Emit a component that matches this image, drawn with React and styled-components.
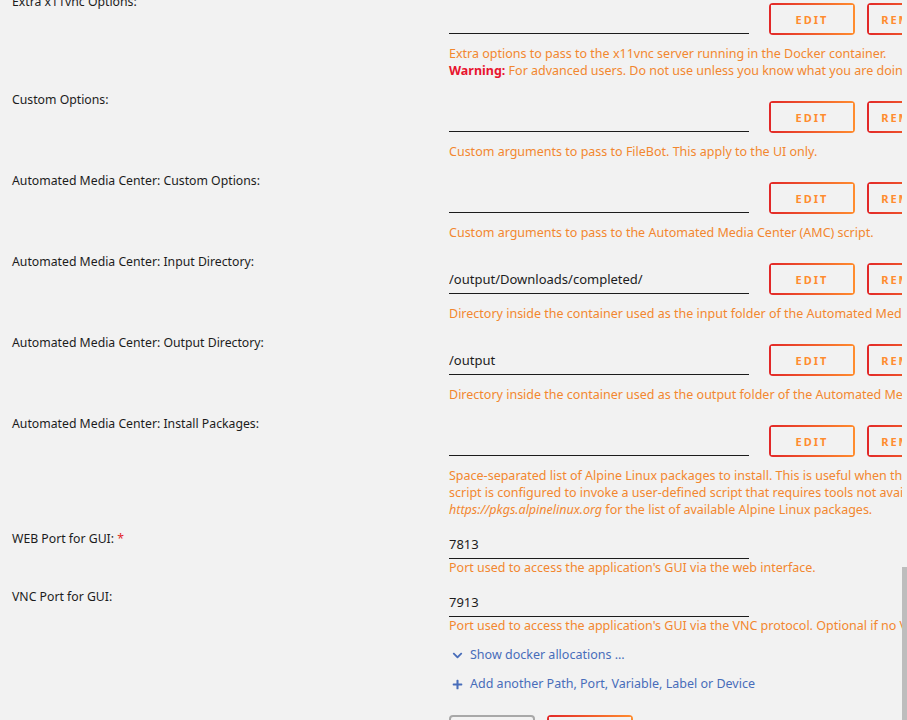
import React from 'react';
import styled, { createGlobalStyle } from 'styled-components';
import { FaChevronDown, FaPlus } from 'react-icons/fa';

const GlobalStyle = createGlobalStyle`
  html, body {
    margin: 0;
    padding: 0;
    height: 100%;
    overflow: hidden;
    background: #f2f2f2;
  }
  body {
    font-family: "Noto Sans", "Open Sans", sans-serif;
    color: #1c1c1c;
  }
`;

const Screen = styled.div`
  display: flex;
  height: 720px;
  overflow: hidden;
`;

const Content = styled.div`
  flex: 1;
  min-width: 0;
  overflow: hidden;
`;

const Track = styled.div`
  width: 5px;
  flex: none;
  padding-top: 567px;
`;

const Thumb = styled.div`
  height: 400px;
  background: #bdbdbd;
`;

const Form = styled.div`
  margin-top: -7px;
  padding-left: 12px;
`;

const Row = styled.div`
  display: grid;
  grid-template-columns: 437px 1fr;
  padding-bottom: 12px;
`;

const Label = styled.div`
  font-size: 12.25px;
  line-height: 18px;
  color: #1c1c1c;
  white-space: nowrap;
`;

const Required = styled.span`
  color: #e22828;
`;

const Field = styled.div`
  min-width: 0;
`;

const InputLine = styled.div`
  display: flex;
  align-items: flex-end;
  margin-top: ${(p) => (p.$editable ? '10px' : '0')};
  height: ${(p) => (p.$editable ? '32px' : 'auto')};
  white-space: nowrap;
`;

const TextInput = styled.input`
  box-sizing: border-box;
  width: 300px;
  height: 29px;
  flex: none;
  margin: 0 20px ${(p) => (p.$editable ? '1px' : '0')} 0;
  padding: 0;
  border: 0;
  border-bottom: 1px solid #1c1c1c;
  background: transparent;
  font-family: "Noto Sans", sans-serif;
  font-size: 13px;
  color: #1c1c1c;
  outline: none;
`;

const Button = styled.button`
  box-sizing: border-box;
  flex: none;
  width: 86px;
  height: 32px;
  margin: 0 12px 0 0;
  padding: 0;
  border: 0;
  border-radius: 4px;
  font-family: "Noto Sans", sans-serif;
  font-size: 11px;
  font-weight: bold;
  letter-spacing: 2px;
  text-transform: uppercase;
  color: ${(p) => (p.$muted ? '#9a9a9a' : '#ff8c2f')};
  background: ${(p) =>
    p.$muted
      ? 'transparent'
      : `linear-gradient(90deg, #e22828, #ff8c2f) 0 0 / 100% 2px no-repeat,
         linear-gradient(90deg, #e22828, #ff8c2f) 0 100% / 100% 2px no-repeat,
         linear-gradient(#e22828, #e22828) 0 0 / 2px 100% no-repeat,
         linear-gradient(#ff8c2f, #ff8c2f) 100% 0 / 2px 100% no-repeat`};
  box-shadow: ${(p) => (p.$muted ? 'inset 0 0 0 2px #a8a8a8' : 'none')};
  cursor: pointer;
`;

const Help = styled.div`
  margin-top: ${(p) => (p.$editable ? '10px' : '0')};
  font-family: "Noto Sans", sans-serif;
  font-size: 12.5px;
  line-height: 17px;
  color: #f2872f;
  white-space: nowrap;

  em {
    font-style: italic;
  }
`;

const Warn = styled.strong`
  color: #e8142e;
  font-weight: bold;
`;

const Links = styled.div`
  display: flex;
  flex-direction: column;
  align-items: flex-start;
  gap: 11px;
`;

const LinkItem = styled.a`
  display: flex;
  align-items: center;
  gap: 7px;
  padding-left: 3px;
  font-size: 12.5px;
  line-height: 18px;
  color: #486dba;
  text-decoration: none;

  svg {
    width: 11px;
    height: 11px;
  }
`;

const Actions = styled.div`
  display: flex;
  margin-top: 11px;
`;

const fields = [
  {
    label: 'Extra x11vnc Options:',
    value: '',
    editable: true,
    help: (
      <>
        Extra options to pass to the x11vnc server running in the Docker container.
        <br />
        <Warn>Warning:</Warn> For advanced users. Do not use unless you know what you are doing.
      </>
    ),
  },
  {
    label: 'Custom Options:',
    value: '',
    editable: true,
    help: 'Custom arguments to pass to FileBot. This apply to the UI only.',
  },
  {
    label: 'Automated Media Center: Custom Options:',
    value: '',
    editable: true,
    help: 'Custom arguments to pass to the Automated Media Center (AMC) script.',
  },
  {
    label: 'Automated Media Center: Input Directory:',
    value: '/output/Downloads/completed/',
    editable: true,
    help: 'Directory inside the container used as the input folder of the Automated Media Center (AMC) script.',
  },
  {
    label: 'Automated Media Center: Output Directory:',
    value: '/output',
    editable: true,
    help: 'Directory inside the container used as the output folder of the Automated Media Center (AMC) script.',
  },
  {
    label: 'Automated Media Center: Install Packages:',
    value: '',
    editable: true,
    help: (
      <>
        Space-separated list of Alpine Linux packages to install. This is useful when the AMC
        <br />
        script is configured to invoke a user-defined script that requires tools not available in the image. See
        <br />
        <em>https://pkgs.alpinelinux.org</em> for the list of available Alpine Linux packages.
      </>
    ),
  },
  {
    label: 'WEB Port for GUI:',
    required: true,
    value: '7813',
    help: "Port used to access the application's GUI via the web interface.",
  },
  {
    label: 'VNC Port for GUI:',
    value: '7913',
    help: "Port used to access the application's GUI via the VNC protocol. Optional if no VNC client is used.",
  },
];

export default function App() {
  return (
    <>
      <GlobalStyle />
      <Screen>
        <Content>
          <Form>
            {fields.map((f) => (
              <Row key={f.label}>
                <Label>
                  {f.label}
                  {f.required && <Required> *</Required>}
                </Label>
                <Field>
                  <InputLine $editable={f.editable}>
                    <TextInput type="text" defaultValue={f.value} $editable={f.editable} />
                    {f.editable && (
                      <>
                        <Button type="button">Edit</Button>
                        <Button type="button">Remove</Button>
                      </>
                    )}
                  </InputLine>
                  <Help $editable={f.editable}>{f.help}</Help>
                </Field>
              </Row>
            ))}
            <Row>
              <span />
              <Links>
                <LinkItem href="#">
                  <FaChevronDown />
                  Show docker allocations ...
                </LinkItem>
                <LinkItem href="#">
                  <FaPlus />
                  Add another Path, Port, Variable, Label or Device
                </LinkItem>
                <Actions>
                  <Button type="button" $muted>Apply</Button>
                  <Button type="button">Done</Button>
                </Actions>
              </Links>
            </Row>
          </Form>
        </Content>
        <Track>
          <Thumb />
        </Track>
      </Screen>
    </>
  );
}
